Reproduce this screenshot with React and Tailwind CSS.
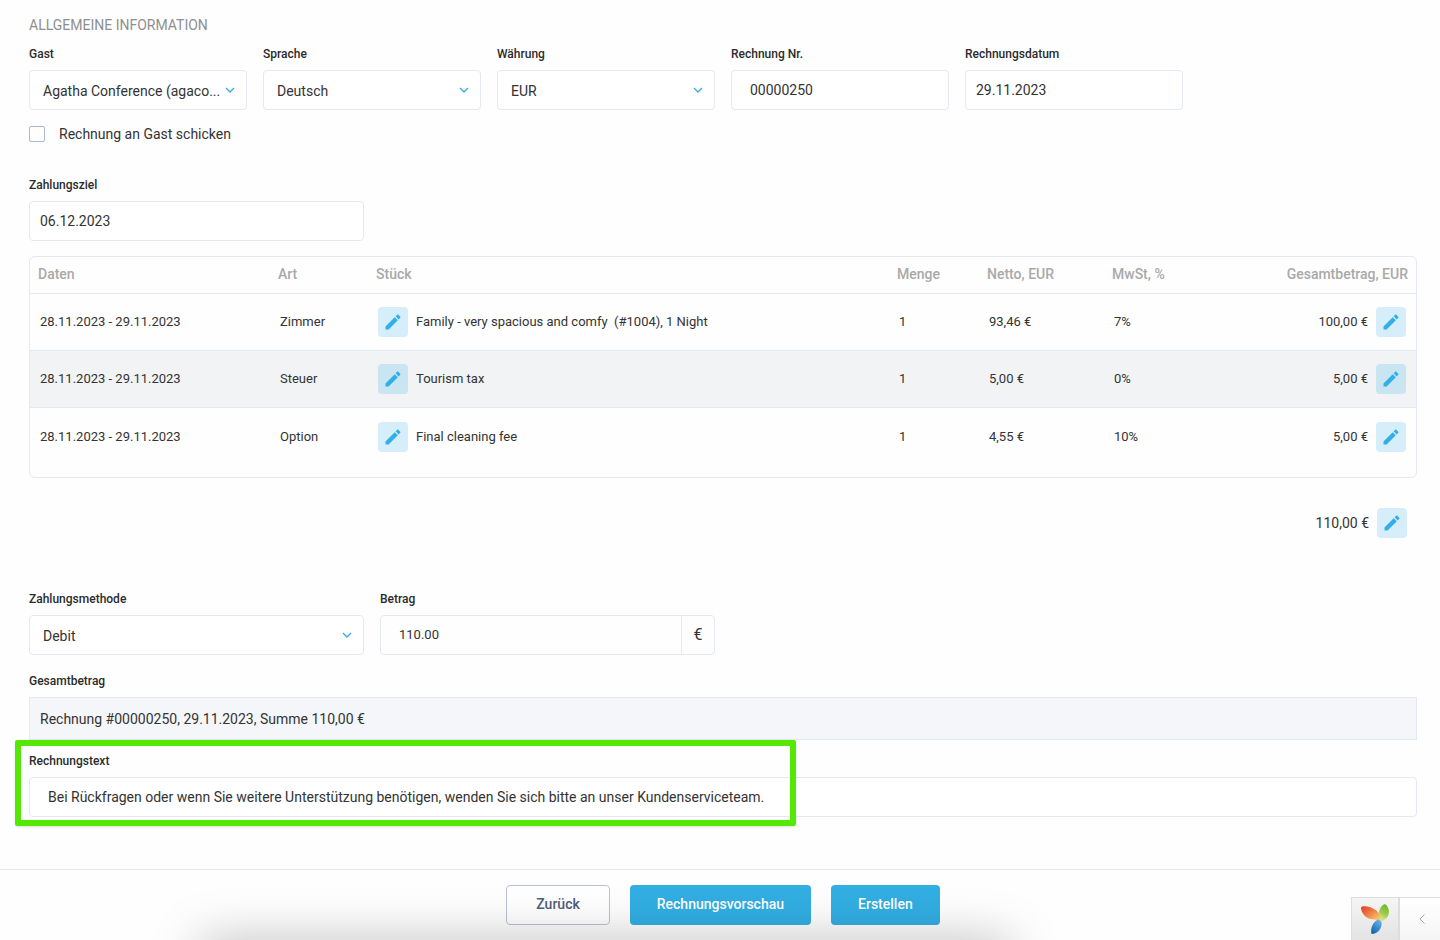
import React, { useState } from 'react';

const positions = [
  {
    id: 1,
    dates: '28.11.2023 - 29.11.2023',
    type: 'Zimmer',
    name: 'Family - very spacious and comfy\u00a0 (#1004), 1 Night',
    qty: '1',
    net: '93,46 €',
    vat: '7%',
    total: '100,00 €',
  },
  {
    id: 2,
    dates: '28.11.2023 - 29.11.2023',
    type: 'Steuer',
    name: 'Tourism tax',
    qty: '1',
    net: '5,00 €',
    vat: '0%',
    total: '5,00 €',
  },
  {
    id: 3,
    dates: '28.11.2023 - 29.11.2023',
    type: 'Option',
    name: 'Final cleaning fee',
    qty: '1',
    net: '4,55 €',
    vat: '10%',
    total: '5,00 €',
  },
];

const boxClass =
  'block h-10 w-full rounded border border-[#e3e8f1] bg-white text-[14px] text-[#333] outline-none focus:border-[#32aee2]';

function Label({ htmlFor, children }) {
  return (
    <label htmlFor={htmlFor} className="mb-2 block text-[12px] leading-4 font-medium text-[#2b2b2b]">
      {children}
    </label>
  );
}

function TextField({ id, label, value, className = 'px-[10px]' }) {
  const [text, setText] = useState(value);

  return (
    <div>
      <Label htmlFor={id}>{label}</Label>
      <input
        id={id}
        type="text"
        value={text}
        onChange={(e) => setText(e.target.value)}
        className={`${boxClass} ${className}`}
      />
    </div>
  );
}

function SelectField({ id, label, options }) {
  return (
    <div>
      <Label htmlFor={id}>{label}</Label>
      <div className="relative">
        <select id={id} className={`${boxClass} appearance-none truncate pt-[3px] pr-6 pl-[13px]`}>
          {options.map((option) => (
            <option key={option}>{option}</option>
          ))}
        </select>
        <svg
          className="pointer-events-none absolute top-4 right-3 h-2 w-[10px] text-[#32aee2]"
          viewBox="0 0 10 8"
          fill="none"
          stroke="currentColor"
          strokeWidth="1.3"
        >
          <path d="M1 2l4 4 4-4" />
        </svg>
      </div>
    </div>
  );
}

function EditButton({ label, active }) {
  return (
    <button
      type="button"
      aria-label={label}
      className={`flex size-[30px] shrink-0 items-center justify-center rounded text-[#32aee8] ${
        active ? 'bg-[#cae5f2]' : 'bg-[#d6eefa]'
      }`}
    >
      <svg className="size-5" viewBox="0 0 24 24" fill="currentColor">
        <path d="M20.71 7.04c.39-.39.39-1.04 0-1.41l-2.34-2.34c-.37-.39-1.02-.39-1.41 0l-1.84 1.83 3.75 3.75M3 17.25V21h3.75L17.81 9.93l-3.75-3.75L3 17.25z" />
      </svg>
    </button>
  );
}

function PositionsTable() {
  return (
    <div className="mt-[15px] overflow-hidden rounded-md border border-[#e3e8f1] pb-3">
      <table className="w-full table-fixed border-separate border-spacing-0 text-left text-[13px] leading-5 text-[#333]">
        <colgroup>
          <col className="w-[240px]" />
          <col className="w-[98px]" />
          <col />
          <col className="w-[90px]" />
          <col className="w-[125px]" />
          <col className="w-[125px]" />
          <col className="w-[187px]" />
        </colgroup>
        <thead>
          <tr className="h-[37px] text-[14px] text-[#a9a9a9] *:border-b *:border-[#e3e8f1] *:px-2 *:pb-[2px] *:font-medium">
            <th>Daten</th>
            <th>Art</th>
            <th>Stück</th>
            <th>Menge</th>
            <th>Netto, EUR</th>
            <th>MwSt, %</th>
            <th className="text-right">Gesamtbetrag, EUR</th>
          </tr>
        </thead>
        <tbody>
          {positions.map((row, index) => (
            <tr
              key={row.id}
              className="h-[57px] *:border-[#e3e8f1] *:px-[10px] not-last:*:border-b even:bg-[#f2f3f5]"
            >
              <td>{row.dates}</td>
              <td>{row.type}</td>
              <td>
                <div className="flex items-center gap-2">
                  <EditButton label={`${row.type} bearbeiten`} active={index % 2 === 1} />
                  <span>{row.name}</span>
                </div>
              </td>
              <td>{row.qty}</td>
              <td>{row.net}</td>
              <td>{row.vat}</td>
              <td>
                <div className="flex items-center justify-end gap-2">
                  <span>{row.total}</span>
                  <EditButton label={`Betrag ${row.type} bearbeiten`} active={index % 2 === 1} />
                </div>
              </td>
            </tr>
          ))}
        </tbody>
      </table>
    </div>
  );
}

function AmountField() {
  const [amount, setAmount] = useState('110.00');

  return (
    <div>
      <Label htmlFor="amount">Betrag</Label>
      <div className="flex h-10 rounded border border-[#e3e8f1]">
        <input
          id="amount"
          type="text"
          value={amount}
          onChange={(e) => setAmount(e.target.value)}
          className="min-w-0 flex-1 pl-[18px] text-[13px] text-[#333] outline-none"
        />
        <span className="flex w-[33px] items-center justify-center border-l border-[#e3e8f1] text-[16px] text-[#333]">
          €
        </span>
      </div>
    </div>
  );
}

function DebugToolbar() {
  return (
    <div className="fixed right-0 bottom-0 flex h-[43px] w-[89px] border-t border-l border-[#ddd]">
      <a
        href="#debug"
        aria-label="Debugger"
        className="flex w-12 items-center justify-center border-r-2 border-[#ddd] bg-linear-to-b from-[#f5f5f5] to-[#e3e3e3]"
      >
        <svg className="h-[30px] w-7" viewBox="0 0 28 30">
          <defs>
            <linearGradient id="leafRed" x1="0" y1="0" x2="1" y2="1">
              <stop offset="0" stopColor="#dd3b25" />
              <stop offset="0.5" stopColor="#f08a4b" />
              <stop offset="1" stopColor="#fde57a" />
            </linearGradient>
            <linearGradient id="leafGreen" x1="0.6" y1="0" x2="0.3" y2="1">
              <stop offset="0" stopColor="#6fb52c" />
              <stop offset="0.5" stopColor="#9ccb4a" />
              <stop offset="1" stopColor="#e9ee9c" />
            </linearGradient>
            <linearGradient id="leafBlue" x1="0.8" y1="0" x2="0.2" y2="1">
              <stop offset="0" stopColor="#6fb3e4" />
              <stop offset="1" stopColor="#0e64b0" />
            </linearGradient>
          </defs>
          <path d="M0 3.500C1 1 10 2 15.500 6.500c3.500 3 4.500 7 5 11.500C16 14.500 11 16.500 6 13.500 2.500 11.500 0 7 0 3.500z" fill="url(#leafRed)" />
          <path d="M24 0c4.500 3 5 10 2 13.500-1.500 2-3.500 2.500-5.500 4.500C20 14.500 17.500 12 18 8c.5-4 3-7 6-8z" fill="url(#leafGreen)" />
          <path d="M20.500 18C21.500 24 17 30 10.500 30 9 24 12 18 17 15.500c1.500.5 3 1.500 3.500 2.500z" fill="url(#leafBlue)" />
        </svg>
      </a>
      <button
        type="button"
        aria-label="Toolbar öffnen"
        className="flex flex-1 items-center justify-center bg-linear-to-b from-white to-[#f5f5f5] pl-[3px] text-[#aaa]"
      >
        <svg className="h-[10px] w-[6px]" viewBox="0 0 6 10" fill="none" stroke="currentColor">
          <path d="M5.500 0.500L1 5l4.500 4.500" />
        </svg>
      </button>
    </div>
  );
}

export default function App() {
  const [sendToGuest, setSendToGuest] = useState(false);

  return (
    <div className="h-screen overflow-hidden bg-[#fefefe] font-[Roboto,sans-serif] text-[#333]">
      <form className="pt-[15px] pr-[23px] pl-[29px]" onSubmit={(e) => e.preventDefault()}>
        <h2 className="mb-[11px] text-[14px] leading-5 text-[#8f8f8f] uppercase">Allgemeine Information</h2>

        <div className="grid grid-cols-6 gap-x-4">
          <SelectField id="guest" label="Gast" options={['Agatha Conference (agaco...']} />
          <SelectField id="language" label="Sprache" options={['Deutsch', 'English']} />
          <SelectField id="currency" label="Währung" options={['EUR', 'CHF']} />
          <TextField id="number" label="Rechnung Nr." value="00000250" className="px-[18px]" />
          <TextField id="date" label="Rechnungsdatum" value="29.11.2023" />
        </div>

        <div className="mt-[14px] mb-[33px] flex items-center gap-[14px]">
          <input
            id="send"
            type="checkbox"
            checked={sendToGuest}
            onChange={(e) => setSendToGuest(e.target.checked)}
            className="size-4 appearance-none rounded-xs border border-[#a9b8d3] checked:bg-[#32aee2]"
          />
          <label htmlFor="send" className="text-[14px] leading-5">
            Rechnung an Gast schicken
          </label>
        </div>

        <div className="grid grid-cols-4 gap-x-4">
          <TextField id="due" label="Zahlungsziel" value="06.12.2023" />
        </div>

        <PositionsTable />

        {/* Invoice total */}
        <div className="mt-[30px] flex items-center justify-end gap-2 pr-[10px] text-[14px]">
          <span>110,00 €</span>
          <EditButton label="Summe bearbeiten" />
        </div>

        <div className="mt-[53px] grid grid-cols-4 gap-x-4">
          <SelectField id="method" label="Zahlungsmethode" options={['Debit', 'Bar', 'Überweisung']} />
          <AmountField />
        </div>

        <div className="mt-[18px]">
          <Label htmlFor="summary">Gesamtbetrag</Label>
          <input
            id="summary"
            type="text"
            readOnly
            value="Rechnung #00000250, 29.11.2023, Summe 110,00 €"
            className="block h-[43px] w-full border border-[#e3e8f1] bg-[#f5f6fa] px-[10px] text-[14px] outline-none"
          />
        </div>

        {/* Invoice text with highlight frame */}
        <div className="relative mt-[13px]">
          <TextField
            id="text"
            label="Rechnungstext"
            value="Bei Rückfragen oder wenn Sie weitere Unterstützung benötigen, wenden Sie sich bitte an unser Kundenserviceteam."
            className="px-[18px]"
          />
          <div className="pointer-events-none absolute -top-[13px] -bottom-[9px] -left-[14px] w-[781px] rounded-xs border-6 border-[#55e805] shadow-sm" />
        </div>
      </form>

      <footer className="mt-[52px] flex justify-center gap-5 border-t border-[#e3e8f1] pt-[15px] pr-[23px] pb-4 pl-[29px] text-[14px] font-medium">
        <button type="button" className="h-10 rounded border border-[#b9c3d6] bg-white px-[29px] pb-[2px] text-[#4f5d7d]">
          Zurück
        </button>
        <button type="button" className="h-10 rounded bg-[#32aee2] px-[27px] pb-[2px] text-white">
          Rechnungsvorschau
        </button>
        <button type="button" className="h-10 rounded bg-[#32aee2] px-[27px] pb-[2px] text-white">
          Erstellen
        </button>
      </footer>

      {/* Soft shadow rising from the bottom edge */}
      <div className="pointer-events-none fixed right-[430px] -bottom-10 left-[200px] h-10 shadow-[0_0_50px_rgba(0,0,0,0.26)]" />

      <DebugToolbar />
    </div>
  );
}
